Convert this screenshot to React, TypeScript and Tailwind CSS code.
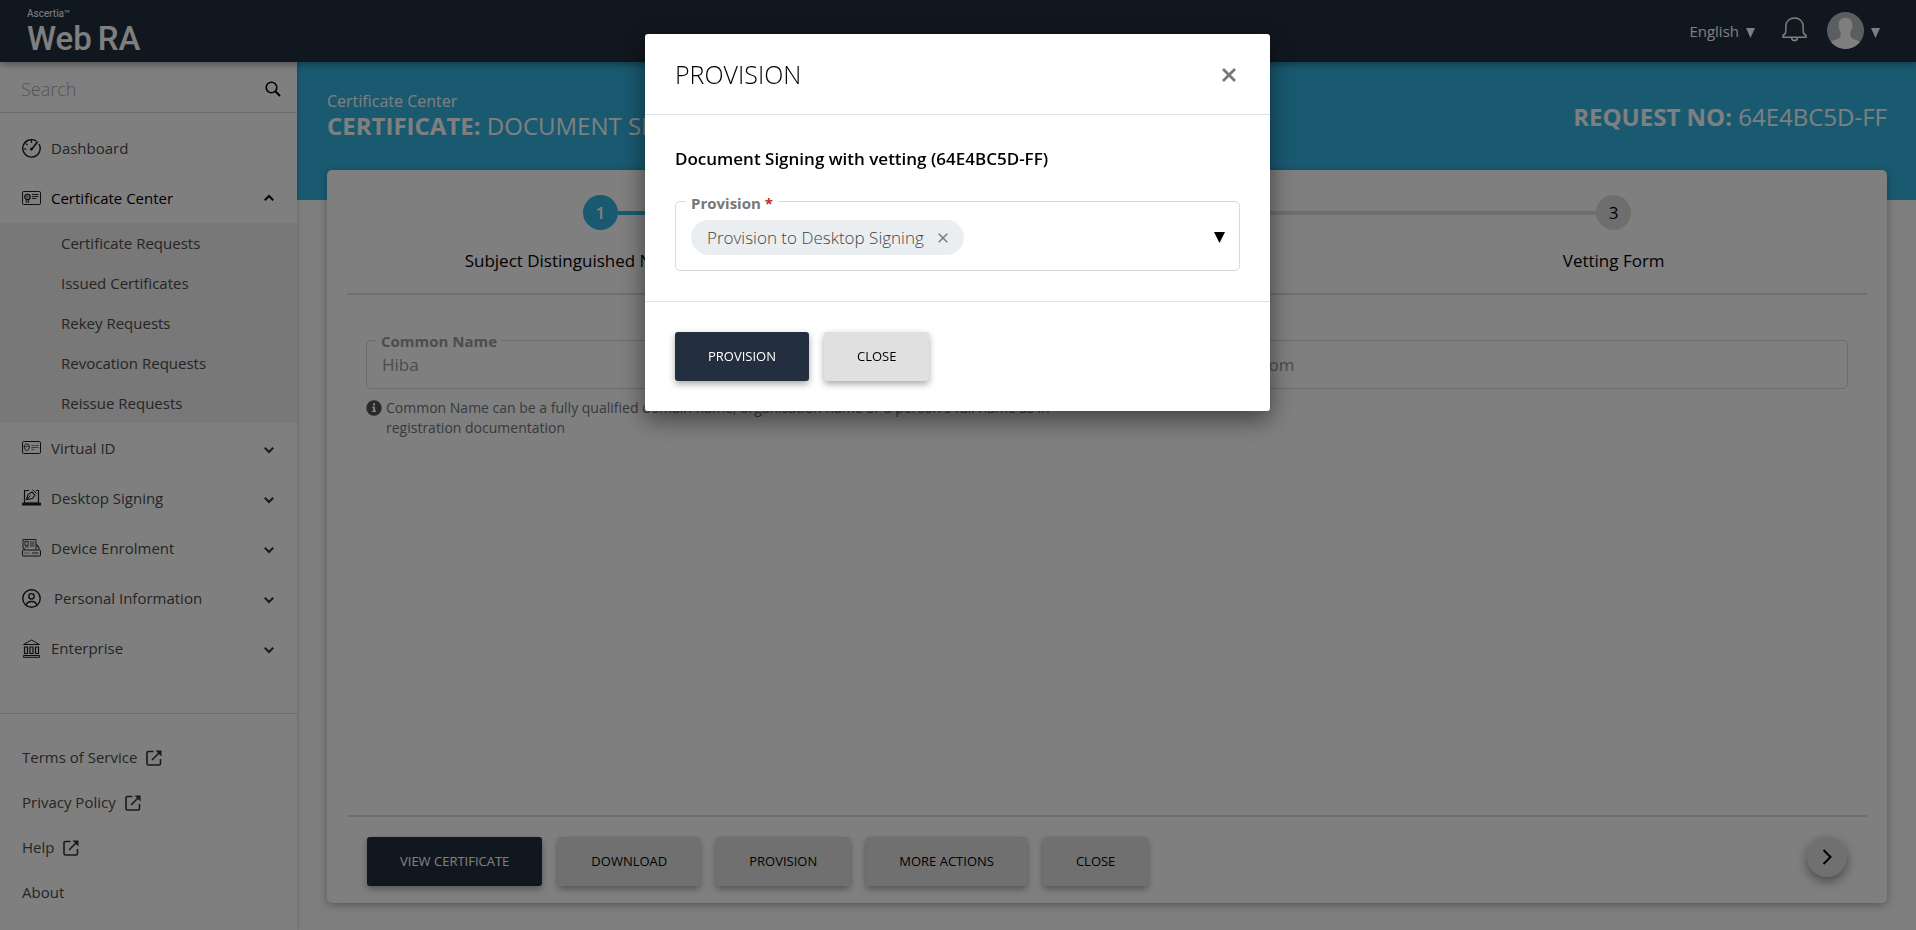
import React, { useState } from 'react';

type IconProps = { className?: string };

const DashboardIcon: React.FC<IconProps> = ({ className }) => (
  <svg viewBox="0 0 19 19" fill="none" stroke="currentColor" className={className}>
    <path d="M14.4 2.200A8.700 8.700 0 1 0 17 5" strokeWidth="1.4" />
    <path d="M9.5 10.5 15.4 3" strokeWidth="1.6" strokeLinecap="round" />
    <circle cx="9.4" cy="10.2" r="1" fill="currentColor" />
    <path d="M9.5 1v3M2 10h2.5M3.8 4.5l1.8 1.6" strokeWidth="1.2" />
  </svg>
);

const CertificateIcon: React.FC<IconProps> = ({ className }) => (
  <svg viewBox="0 0 19 19" fill="none" stroke="currentColor" className={className}>
    <rect x="0.5" y="2.5" width="18" height="13" rx="1.2" />
    <circle cx="5.5" cy="8" r="2.7" strokeWidth="1.2" />
    <circle cx="5.5" cy="8" r="0.8" strokeWidth="0.6" />
    <path d="M4.3 10.5v3l1.2-.8 1.2.8v-3" strokeWidth="0.9" />
    <path d="M10 5.500h6.500M10 7.500h6.500M10 9.500h4.500" strokeWidth="0.9" />
  </svg>
);

const VirtualIdIcon: React.FC<IconProps> = ({ className }) => (
  <svg viewBox="0 0 19 19" fill="none" stroke="currentColor" className={className}>
    <rect x="0.5" y="2.5" width="18" height="12" rx="1.2" />
    <path d="M4.6 5C2.4 5 1.8 7.200 2.500 8.800c.4 1.600 1.200 2.900 2.300 2.900s2-1.300 2.400-2.900C7.800 7 6.800 5 4.600 5z" strokeWidth="0.9" />
    <path d="M2.500 7.600c1.500.2 3-.3 4.600-.6" strokeWidth="0.7" />
    <path d="M9.500 6.500h3M13.500 6.500h3M9.500 8.500h7M9.500 10.500h2.500" strokeWidth="0.6" />
  </svg>
);

const DesktopSigningIcon: React.FC<IconProps> = ({ className }) => (
  <svg viewBox="0 0 19 19" fill="none" stroke="currentColor" className={className}>
    <path d="M7 1.500H2.500v12.500h14V1.500H14" strokeWidth="1.200" />
    <rect x="0.500" y="14.200" width="18" height="1.800" fill="currentColor" />
    <path d="M4.500 10.500l1.500-5 4-2.500 3 3-2.500 3.500z" strokeWidth="1.100" />
    <path d="M4.500 10.500l4-4M10.500.5l4 4" />
  </svg>
);

const DeviceIcon: React.FC<IconProps> = ({ className }) => (
  <svg viewBox="0 0 19 19" fill="none" stroke="currentColor" className={className}>
    <path d="M2.500 10.500V9.500H1V.5h13v10" strokeWidth="0.900" />
    <rect x="3" y="2.300" width="3.200" height="4" strokeWidth="0.800" />
    <path d="M8 3h4.500M8 5h4.500M8 7h4.500M3 8h3.500" strokeWidth="0.800" />
    <path d="M14 6h1.500v2h1.500v2.500" strokeWidth="0.900" />
    <rect x="0.500" y="11" width="18" height="6" rx="1" />
    <path d="M2.500 14h1M4.500 14h1M6.500 14h1M10 14h6.500" strokeWidth="0.900" />
  </svg>
);

const PersonIcon: React.FC<IconProps> = ({ className }) => (
  <svg viewBox="0 0 19 19" fill="none" stroke="currentColor" strokeWidth="1.400" className={className}>
    <circle cx="9.500" cy="9.500" r="8.700" />
    <circle cx="9.500" cy="7.300" r="2.700" />
    <path d="M4 16.200c1-3 3-3.700 5.500-3.700s4.500.7 5.500 3.700" />
  </svg>
);

const EnterpriseIcon: React.FC<IconProps> = ({ className }) => (
  <svg viewBox="0 0 19 19" fill="none" stroke="currentColor" className={className}>
    <path d="M1.500 5.500l8-4.500 8 4.500z" />
    <path d="M2.500 8h3v6.500h-3zM8 8h3v6.500H8zM13.500 8h3v6.500h-3z" strokeWidth="1.200" />
    <path d="M1.500 16.500h16v1.800h-16z" />
  </svg>
);

const ChevronIcon: React.FC<IconProps> = ({ className }) => (
  <svg viewBox="0 0 10 8" fill="none" stroke="currentColor" strokeWidth="2" className={className}>
    <path d="M.8 1.800L5 6l4.200-4.200" />
  </svg>
);

const ExternalIcon: React.FC<IconProps> = ({ className }) => (
  <svg viewBox="0 0 16 16" fill="none" stroke="currentColor" strokeWidth="1.600" className={className}>
    <path d="M7.500 1.500h-5a1.500 1.500 0 0 0-1.500 1.500v10.500a1.500 1.500 0 0 0 1.500 1.500H13a1.500 1.500 0 0 0 1.500-1.500V9" />
    <path d="M6 10l7.500-7.500" />
    <path d="M9.500.5h6v6z" fill="currentColor" stroke="none" />
  </svg>
);

const SearchIcon: React.FC<IconProps> = ({ className }) => (
  <svg viewBox="0 0 16 16" fill="none" stroke="currentColor" strokeWidth="1.600" className={className}>
    <circle cx="6.500" cy="6.500" r="5.300" />
    <path d="M10.300 10.300l4.700 4.700" strokeWidth="2" />
  </svg>
);

const BellIcon: React.FC<IconProps> = ({ className }) => (
  <svg viewBox="0 0 26 26" fill="none" stroke="currentColor" strokeWidth="1.500" className={className}>
    <path d="M1 21v-2c2.500-.8 3-2 3-4.500V9.500C4 4.500 8 1 13 1s9 3.500 9 8.500v5c0 2.500.5 3.700 3 4.500v2z" />
    <path d="M10 21.500c0 4 6 4 6 0" />
  </svg>
);

const CaretIcon: React.FC<IconProps> = ({ className }) => (
  <svg viewBox="0 0 11 10" fill="currentColor" preserveAspectRatio="none" className={className}>
    <path d="M0 0h11L5.500 10z" />
  </svg>
);

const CrossIcon: React.FC<IconProps & { thin?: boolean }> = ({ className, thin }) => (
  <svg viewBox="0 0 14 14" fill="none" stroke="currentColor" strokeWidth={thin ? 2 : 2.8} className={className}>
    <path d="M1 1l12 12M13 1L1 13" />
  </svg>
);

const InfoIcon: React.FC<IconProps> = ({ className }) => (
  <svg viewBox="0 0 16 16" className={className}>
    <circle cx="8" cy="8" r="7.700" fill="currentColor" />
    <path d="M7 3.300h2.100v2H7zM6.200 6.600h2.900v4h.9v1.500H6.200v-1.500H7V8h-.8z" fill="#fff" />
  </svg>
);

const menu = [
  { label: 'Dashboard', icon: DashboardIcon },
  {
    label: 'Certificate Center',
    icon: CertificateIcon,
    active: true,
    items: ['Certificate Requests', 'Issued Certificates', 'Rekey Requests', 'Revocation Requests', 'Reissue Requests'],
  },
  { label: 'Virtual ID', icon: VirtualIdIcon, expandable: true },
  { label: 'Desktop Signing', icon: DesktopSigningIcon, expandable: true },
  { label: 'Device Enrolment', icon: DeviceIcon, expandable: true },
  { label: 'Personal Information', icon: PersonIcon, expandable: true },
  { label: 'Enterprise', icon: EnterpriseIcon, expandable: true },
];

const links = [
  { label: 'Terms of Service', external: true },
  { label: 'Privacy Policy', external: true },
  { label: 'Help', external: true },
  { label: 'About', external: false },
];

const steps = ['Subject Distinguished Name (SDN)', 'Subject Alternative Name (SAN)', 'Vetting Form'];

interface ButtonProps {
  primary?: boolean;
  onClick?: () => void;
  children: React.ReactNode;
}

const Button: React.FC<ButtonProps> = ({ primary, onClick, children }) => (
  <button
    type="button"
    onClick={onClick}
    className={`h-[49px] px-[33px] pt-px rounded-[3px] text-[13px] uppercase whitespace-nowrap shadow-[0_3px_7px_rgba(0,0,0,0.35)] ${
      primary ? 'bg-[#232e3e] text-white' : 'bg-[#e0e0e0] text-black'
    }`}
  >
    {children}
  </button>
);

const Header: React.FC = () => (
  <header className="relative z-10 flex h-[62px] shrink-0 items-center justify-between bg-[#222e3d] pl-[27px] pr-9 text-white shadow-[0_2px_8px_rgba(0,0,0,0.4)]">
    <a href="#" className="flex flex-col pt-1 font-['Roboto',sans-serif]">
      <span className="text-[10px] leading-3">Ascertia™</span>
      <span className="flex gap-[6px] text-[33px] leading-[38px] font-medium">
        <span>Web</span>
        <span>RA</span>
      </span>
    </a>
    <div className="flex items-center">
      <button type="button" className="flex items-center gap-[7px] text-[15px]">
        English
        <CaretIcon className="mt-1 h-[10px] w-[9px]" />
      </button>
      <button type="button" aria-label="Notifications" className="mb-1 ml-[27px]">
        <BellIcon className="size-[25px]" />
      </button>
      <button type="button" aria-label="Account" className="mb-px ml-5 flex items-center gap-[7px]">
        <svg viewBox="0 0 38 38" className="size-[37px]">
          <clipPath id="avatar">
            <circle cx="19" cy="19" r="19" />
          </clipPath>
          <g clipPath="url(#avatar)">
            <path d="M0 0h38v38H0z" fill="#b4bdc2" />
            <path
              d="M19 6c-4.500 0-7 3-7 7.500 0 3 .8 5.500 2 7v4c0 2-2 3-5 4-3 1.200-5 2-7 4v6h34v-6c-2-2-4-2.800-7-4-3-1-5-2-5-4v-4c1.200-1.500 2-4 2-7C26 9 23.500 6 19 6z"
              fill="#fff"
            />
          </g>
        </svg>
        <CaretIcon className="mt-1 h-[10px] w-[9px]" />
      </button>
    </div>
  </header>
);

const Sidebar: React.FC = () => (
  <aside className="z-[1] w-[297px] shrink-0 bg-white text-[15px] text-[#4a4a4a] shadow-[0_0_4px_rgba(0,0,0,0.25)]">
    <div className="flex h-[51px] items-center border-b border-[#d8d8d8] pt-1 pr-4 pl-[21px]">
      <input
        type="text"
        placeholder="Search"
        aria-label="Search"
        className="min-w-0 flex-1 text-lg font-light outline-none placeholder:text-[#a8a8a8]"
      />
      <button type="button" aria-label="Run search" className="text-black">
        <SearchIcon className="size-4" />
      </button>
    </div>
    <nav className="border-b border-[#d8d8d8] pt-[10px] pb-10">
      {menu.map(({ label, icon: Icon, active, items, expandable }) => (
        <div key={label}>
          <a href="#" className={`flex h-[50px] items-center pr-[23px] pl-[22px] ${active ? 'text-black' : ''}`}>
            <Icon className="size-[19px] text-[#1c1c1c]" />
            <span className={label === 'Personal Information' ? 'ml-[13px] flex-1' : 'ml-[10px] flex-1'}>{label}</span>
            {expandable && <ChevronIcon className="mt-[3px] h-2 w-[10px] text-[#333]" />}
            {active && <ChevronIcon className="h-2 w-[10px] rotate-180 text-black" />}
          </a>
          {items && (
            <ul className="bg-[#f1f1f1]">
              {items.map(item => (
                <li key={item}>
                  <a href="#" className="flex h-10 items-center pl-[61px]">{item}</a>
                </li>
              ))}
            </ul>
          )}
        </div>
      ))}
    </nav>
    <ul className="pt-[21px]">
      {links.map(link => (
        <li key={link.label}>
          <a href="#" className="flex h-[45px] items-center gap-[9px] pl-[22px]">
            {link.label}
            {link.external && <ExternalIcon className="size-4 text-[#333]" />}
          </a>
        </li>
      ))}
    </ul>
  </aside>
);

const Stepper: React.FC = () => (
  <ol className="flex border-b-2 border-[#dcdcdc] pt-[25px] pb-[19px] text-[17px]">
    {steps.map((step, index) => (
      <li key={step} className="flex flex-1 flex-col items-center gap-[18px]">
        <div className="flex w-full items-center">
          <span className={`h-1 flex-1 ${index === 0 ? '' : index === 1 ? 'bg-[#34b4e3]' : 'bg-[#dcdcdc]'}`} />
          <span
            className={`flex size-[35px] items-center justify-center rounded-full ${
              index === 0 ? 'bg-[#34b4e3] font-semibold text-white' : 'bg-[#dcdcdc] text-black'
            }`}
          >
            {index + 1}
          </span>
          <span className={`h-1 flex-1 ${index === 0 ? 'bg-[#34b4e3]' : index === 1 ? 'bg-[#dcdcdc]' : ''}`} />
        </div>
        <span className={`leading-[26px] text-black ${index === 0 ? 'font-medium' : ''}`}>{step}</span>
      </li>
    ))}
  </ol>
);

const Field: React.FC<{ id: string; label: string; value: string; hint?: string }> = ({ id, label, value, hint }) => (
  <div>
    <div className="relative">
      <label htmlFor={id} className="absolute -top-[9px] left-[10px] bg-white px-[5px] text-[15px] leading-5 font-bold text-[#999]">
        {label}
      </label>
      <input
        id={id}
        type="text"
        defaultValue={value}
        disabled
        className="h-[49px] w-full rounded-[5px] border border-[#d4d4d4] px-[15px] text-[17px] text-[#999]"
      />
    </div>
    {hint && (
      <p className="mt-[9px] flex gap-1 text-sm leading-5 text-[#6c757d]">
        <InfoIcon className="mt-[2px] size-4 shrink-0 text-[#555]" />
        {hint}
      </p>
    )}
  </div>
);

const ProvisionDialog: React.FC<{ onClose: () => void }> = ({ onClose }) => {
  const [selected, setSelected] = useState(['Provision to Desktop Signing']);

  return (
    <div className="fixed inset-0 z-20 flex items-start justify-center bg-black/50 pt-[34px] pr-px">
      <div
        role="dialog"
        aria-modal="true"
        aria-labelledby="dialog-title"
        className="w-full max-w-[625px] rounded-[3px] bg-white shadow-[0_8px_24px_rgba(0,0,0,0.5)]"
      >
        <div className="flex h-[81px] items-center justify-between border-b border-[#dee2e6] pt-[2px] pr-[34px] pl-[30px]">
          <h2 id="dialog-title" className="text-[25px] font-light text-black uppercase">Provision</h2>
          <button type="button" aria-label="Close dialog" onClick={onClose} className="text-[#777]">
            <CrossIcon className="size-[14px]" />
          </button>
        </div>

        <div className="border-b border-[#dee2e6] px-[30px] pt-8 pb-[30px]">
          <p className="text-[17px] leading-6 font-semibold text-black">Document Signing with vetting (64E4BC5D-FF)</p>
          <div className="relative mt-[30px] flex h-[70px] items-center justify-between rounded-[5px] border border-[#d8d8d8] pt-[3px] pr-[14px] pl-[15px]">
            <span id="provision-label" className="absolute -top-[9px] left-[10px] bg-white px-[5px] text-[15px] leading-5 font-bold text-[#777]">
              Provision <span className="text-[#c62828]">*</span>
            </span>
            <ul aria-labelledby="provision-label" className="flex gap-2">
              {selected.map(item => (
                <li key={item} className="flex h-[35px] items-center gap-[14px] rounded-full bg-[#ebeef1] px-4 text-[17px] font-light text-[#444]">
                  {item}
                  <button
                    type="button"
                    aria-label={`Remove ${item}`}
                    onClick={() => setSelected(selected.filter(s => s !== item))}
                    className="text-[#777]"
                  >
                    <CrossIcon thin className="size-[10px]" />
                  </button>
                </li>
              ))}
            </ul>
            <button type="button" aria-haspopup="listbox" aria-labelledby="provision-label" className="text-black">
              <CaretIcon className="h-[11px] w-[11px]" />
            </button>
          </div>
        </div>

        <div className="flex gap-[15px] p-[30px]">
          <Button primary>Provision</Button>
          <Button onClick={onClose}>Close</Button>
        </div>
      </div>
    </div>
  );
};

export default function App() {
  const [open, setOpen] = useState(true);

  return (
    <div className="flex min-h-screen flex-col bg-[#fcfcfc] font-['Open_Sans','Noto_Sans',sans-serif] text-base">
      <Header />
      <div className="flex flex-1">
        <Sidebar />
        <main className="flex min-w-0 flex-1 flex-col">
          <div className="flex h-[138px] justify-between bg-[#34b4e3] pr-[29px] pl-[30px] pt-7 text-white">
            <div>
              <p className="text-base leading-[22px]">Certificate Center</p>
              <h1 className="text-2xl leading-7 uppercase">
                <b className="font-bold">Certificate:</b> Document Signing with vetting
              </h1>
            </div>
            <p className="pt-[11px] text-2xl leading-8 uppercase">
              <b className="font-bold">Request No:</b> 64E4BC5D-FF
            </p>
          </div>

          <section className="relative mr-[29px] -mt-[30px] mb-[27px] ml-[30px] flex flex-1 flex-col rounded-[5px] bg-white px-5 shadow-[0_2px_8px_rgba(0,0,0,0.3)]">
            <Stepper />
            <form className="grid flex-1 grid-cols-2 content-start gap-[30px] px-[19px] pt-[45px]">
              <Field
                id="common-name"
                label="Common Name"
                value="Hiba"
                hint="Common Name can be a fully qualified domain name, organisation name or a person's full name as in registration documentation"
              />
              <Field id="email" label="Email" value="hiba.test@mail.com" />
            </form>
            <div className="flex items-start justify-between border-t-2 border-[#dcdcdc] px-5 pt-5 pb-[17px]">
              <div className="flex flex-wrap gap-4">
                <Button primary>View Certificate</Button>
                <Button>Download</Button>
                <Button onClick={() => setOpen(true)}>Provision</Button>
                <Button>More Actions</Button>
                <Button>Close</Button>
              </div>
              <button
                type="button"
                aria-label="Next step"
                className="flex size-10 items-center justify-center rounded-full bg-[#e0e0e0] shadow-[0_4px_12px_rgba(0,0,0,0.45)]"
              >
                <svg viewBox="0 0 10 16" fill="none" stroke="#000" strokeWidth="2" className="h-4 w-[10px]">
                  <path d="M1.500 1l7 7-7 7" />
                </svg>
              </button>
            </div>
          </section>
        </main>
      </div>
      {open && <ProvisionDialog onClose={() => setOpen(false)} />}
    </div>
  );
}
